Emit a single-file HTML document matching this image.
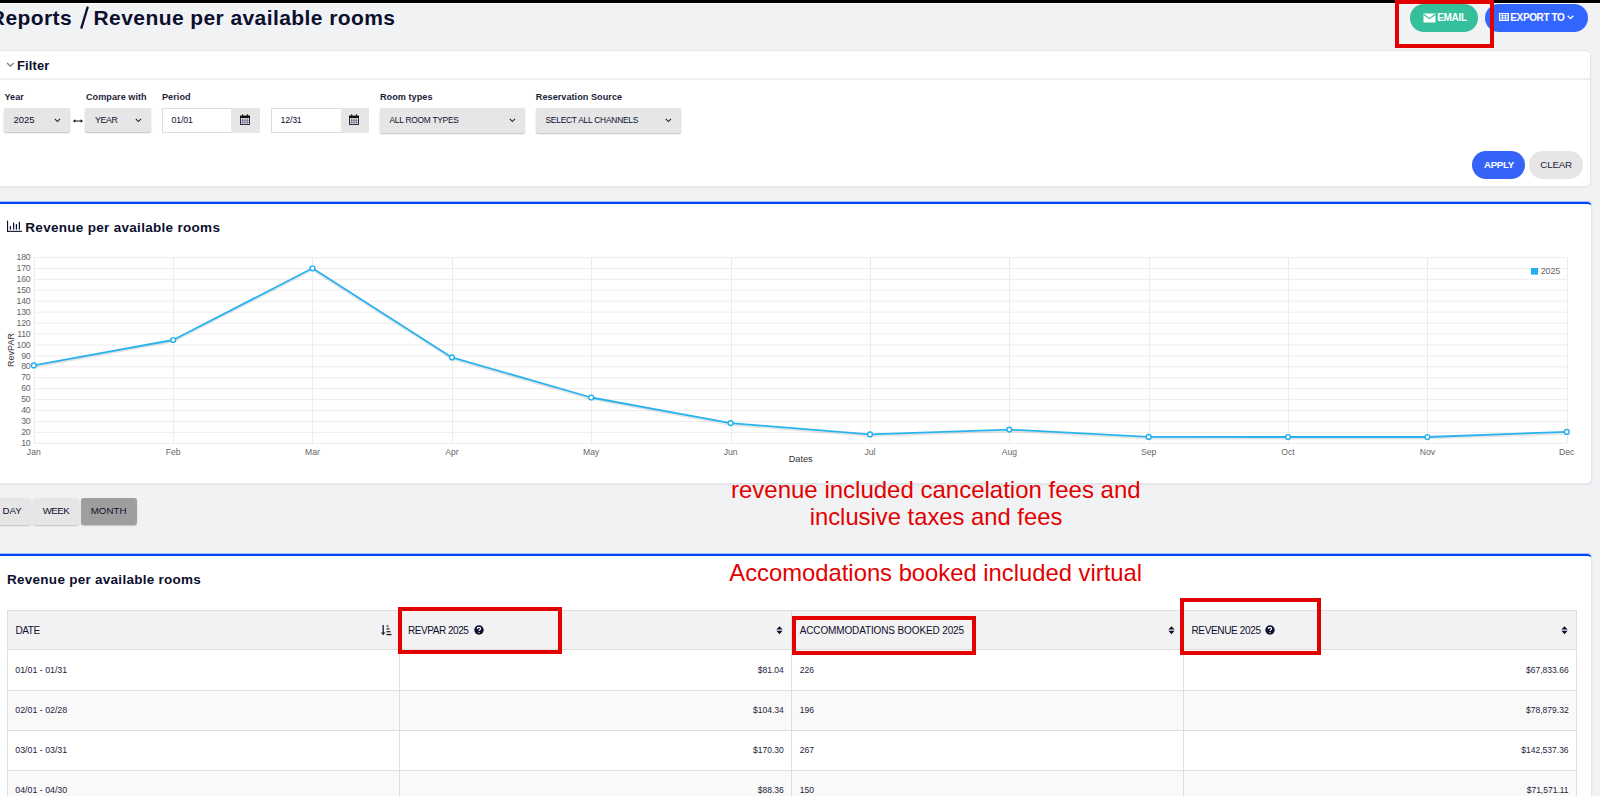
<!DOCTYPE html>
<html><head><meta charset="utf-8">
<style>
*{box-sizing:border-box;margin:0;padding:0}
html,body{width:1600px;height:796px;overflow:hidden;background:#f1f2f4;font-family:"Liberation Sans",sans-serif;color:#1b1d3a}
.a{position:absolute;white-space:nowrap;line-height:1}
.redbox{position:absolute;border:4px solid #e30000}
svg{position:absolute;overflow:visible}
</style></head>
<body>
<div style="position:absolute;left:0px;top:0px;width:1600px;height:3px;background:#000"></div>
<div style="position:absolute;left:0px;top:3px;width:1600px;height:1px;background:#fff"></div>
<div class="a" id="t-reports" style="top:7.32px;font-size:21px;color:#0c0f2e;font-weight:700;letter-spacing:0.4px;left:-10.2px;">Reports</div>
<svg style="left:79px;top:5px" width="11" height="25" viewBox="0 0 11 25"><path d="M2.2 23.6 L8.8 1.6" stroke="#0c0f2e" stroke-width="2.3"/></svg>
<div class="a" id="t-rev" style="top:7.32px;font-size:21px;color:#0c0f2e;font-weight:700;letter-spacing:0.42px;left:93.5px;">Revenue per available rooms</div>
<div style="position:absolute;left:1410px;top:4px;width:68px;height:28px;background:#36bf9d;border-radius:14px"></div>
<svg style="left:1423px;top:13px" width="13" height="10" viewBox="0 0 13 10"><rect x="0.5" y="0.5" width="12" height="9" fill="#fff"/><path d="M0.5 1.2 L6.5 5.6 L12.5 1.2" stroke="#36bf9d" stroke-width="1.1" fill="none"/></svg>
<div class="a" style="top:12.73px;font-size:10px;color:#fff;font-weight:700;letter-spacing:-0.35px;left:1437.3px;">EMAIL</div>
<div style="position:absolute;left:1485px;top:4px;width:103px;height:28px;background:#3366ff;border-radius:14px"></div>
<svg style="left:1498.7px;top:12.7px" width="10" height="8" viewBox="0 0 10 8"><rect x="0" y="0" width="10" height="8" fill="#fff"/><rect x="1.0" y="1.0" width="2" height="1.3" fill="#3366ff"/><rect x="1.0" y="3.2" width="2" height="1.3" fill="#3366ff"/><rect x="1.0" y="5.4" width="2" height="1.3" fill="#3366ff"/><rect x="3.9" y="1.0" width="2" height="1.3" fill="#3366ff"/><rect x="3.9" y="3.2" width="2" height="1.3" fill="#3366ff"/><rect x="3.9" y="5.4" width="2" height="1.3" fill="#3366ff"/><rect x="6.8" y="1.0" width="2" height="1.3" fill="#3366ff"/><rect x="6.8" y="3.2" width="2" height="1.3" fill="#3366ff"/><rect x="6.8" y="5.4" width="2" height="1.3" fill="#3366ff"/></svg>
<div class="a" style="top:12.73px;font-size:10px;color:#fff;font-weight:700;letter-spacing:-0.38px;left:1510.3px;">EXPORT TO</div>
<svg style="left:1567px;top:15px" width="7" height="5" viewBox="0 0 7 5"><path d="M0.7 0.8 L3.5 3.6 L6.3 0.8" stroke="#fff" stroke-width="1.3" fill="none"/></svg>
<div style="position:absolute;left:1395px;top:0px;width:99px;height:48px;border:4px solid #e30000"></div>
<div style="position:absolute;left:-10px;top:50px;width:1601px;height:137px;background:#fff;border:1px solid #e4e5e8;border-radius:5px;box-shadow:0 1px 2px rgba(0,0,0,.045)"></div>
<div style="position:absolute;left:-10px;top:78px;width:1600px;height:2px;background:#eeeff1"></div>
<svg style="left:6px;top:62px" width="9" height="6" viewBox="0 0 9 6"><path d="M1.1 1 L4.4 4.3 L7.7 1" stroke="#80808c" stroke-width="1.25" fill="none"/></svg>
<div class="a" style="top:58.60px;font-size:13px;color:#0c0f2e;font-weight:700;letter-spacing:0.1px;left:17px;">Filter</div>
<div class="a" style="top:92.60px;font-size:9.1px;color:#1b1d3a;font-weight:700;letter-spacing:0.05px;left:4.5px;">Year</div>
<div class="a" style="top:92.60px;font-size:9.1px;color:#1b1d3a;font-weight:700;letter-spacing:0.05px;left:86px;">Compare with</div>
<div class="a" style="top:92.60px;font-size:9.1px;color:#1b1d3a;font-weight:700;letter-spacing:0.05px;left:162px;">Period</div>
<div class="a" style="top:92.60px;font-size:9.1px;color:#1b1d3a;font-weight:700;letter-spacing:0.05px;left:380px;">Room types</div>
<div class="a" style="top:92.60px;font-size:9.1px;color:#1b1d3a;font-weight:700;letter-spacing:0.05px;left:535.8px;">Reservation Source</div>
<div style="position:absolute;left:4px;top:108px;width:66px;height:24px;background:#e6e6e6;border-radius:2px;box-shadow:0 1px 1.5px rgba(0,0,0,.25)"></div>
<div class="a" style="top:115.16px;font-size:9.5px;color:#0c0f2e;left:13.5px;">2025</div>
<svg style="left:53.5px;top:117.6px" width="7" height="5" viewBox="0 0 7 5"><path d="M0.8 0.9 L3.4 3.5 L6 0.9" stroke="#1b1d3a" stroke-width="1.05" fill="none"/></svg>
<svg style="left:73px;top:117.6px" width="10" height="6" viewBox="0 0 10 6"><path d="M1.5 3 H8.5" stroke="#111" stroke-width="1"/><path d="M0 3 L2.3 1.2 V4.8 Z M10 3 L7.7 1.2 V4.8 Z" fill="#111"/></svg>
<div style="position:absolute;left:85px;top:108px;width:66px;height:24px;background:#e6e6e6;border-radius:2px;box-shadow:0 1px 1.5px rgba(0,0,0,.25)"></div>
<div class="a" style="top:115.75px;font-size:8.8px;color:#0c0f2e;letter-spacing:-0.35px;left:95px;">YEAR</div>
<svg style="left:134.5px;top:117.6px" width="7" height="5" viewBox="0 0 7 5"><path d="M0.8 0.9 L3.4 3.5 L6 0.9" stroke="#1b1d3a" stroke-width="1.05" fill="none"/></svg>
<div style="position:absolute;left:162px;top:108px;width:98px;height:24.5px;background:#fff;border:1px solid #dcdcdc"></div>
<div style="position:absolute;left:231px;top:108px;width:29px;height:24.5px;background:#e6e6e6"></div>
<div class="a" style="top:115.75px;font-size:8.8px;color:#0c0f2e;letter-spacing:-0.2px;left:171.6px;">01/01</div>
<svg style="left:240.1px;top:114px" width="10" height="11" viewBox="0 0 10 11"><rect x="0.5" y="2.5" width="9" height="8" fill="#f4f4f8" stroke="#2a2a40" stroke-width="1"/><rect x="0" y="1.6" width="10" height="2.4" fill="#111"/><path d="M2.75 4V10.5 M5 4V10.5 M7.25 4V10.5 M0.5 6.2H9.5 M0.5 8.3H9.5" stroke="#555a70" stroke-width="0.7"/><rect x="1.8" y="0.3" width="1.5" height="2.4" rx="0.6" fill="#222"/><rect x="6.7" y="0.3" width="1.5" height="2.4" rx="0.6" fill="#222"/></svg>
<div style="position:absolute;left:271px;top:108px;width:97.5px;height:24.5px;background:#fff;border:1px solid #dcdcdc"></div>
<div style="position:absolute;left:340.5px;top:108px;width:28.0px;height:24.5px;background:#e6e6e6"></div>
<div class="a" style="top:115.75px;font-size:8.8px;color:#0c0f2e;letter-spacing:-0.2px;left:280.5px;">12/31</div>
<svg style="left:349.1px;top:114px" width="10" height="11" viewBox="0 0 10 11"><rect x="0.5" y="2.5" width="9" height="8" fill="#f4f4f8" stroke="#2a2a40" stroke-width="1"/><rect x="0" y="1.6" width="10" height="2.4" fill="#111"/><path d="M2.75 4V10.5 M5 4V10.5 M7.25 4V10.5 M0.5 6.2H9.5 M0.5 8.3H9.5" stroke="#555a70" stroke-width="0.7"/><rect x="1.8" y="0.3" width="1.5" height="2.4" rx="0.6" fill="#222"/><rect x="6.7" y="0.3" width="1.5" height="2.4" rx="0.6" fill="#222"/></svg>
<div style="position:absolute;left:379.5px;top:108px;width:145.5px;height:25px;background:#e6e6e6;border-radius:2px;box-shadow:0 1px 1.5px rgba(0,0,0,.25)"></div>
<div class="a" style="top:116.19px;font-size:8.4px;color:#0c0f2e;letter-spacing:-0.25px;left:389.5px;">ALL ROOM TYPES</div>
<svg style="left:509px;top:117.5px" width="7" height="5" viewBox="0 0 7 5"><path d="M0.8 0.9 L3.4 3.5 L6 0.9" stroke="#1b1d3a" stroke-width="1.05" fill="none"/></svg>
<div style="position:absolute;left:535.5px;top:108px;width:145.5px;height:25px;background:#e6e6e6;border-radius:2px;box-shadow:0 1px 1.5px rgba(0,0,0,.25)"></div>
<div class="a" style="top:116.19px;font-size:8.4px;color:#0c0f2e;letter-spacing:-0.22px;left:545.5px;">SELECT ALL CHANNELS</div>
<svg style="left:665px;top:117.5px" width="7" height="5" viewBox="0 0 7 5"><path d="M0.8 0.9 L3.4 3.5 L6 0.9" stroke="#1b1d3a" stroke-width="1.05" fill="none"/></svg>
<div style="position:absolute;left:1472px;top:151px;width:53px;height:27.5px;background:#3563f8;border-radius:14px"></div>
<div class="a" style="top:160.09px;font-size:9.7px;color:#fff;font-weight:700;letter-spacing:-0.3px;left:1484px;">APPLY</div>
<div style="position:absolute;left:1528.5px;top:151px;width:54.5px;height:27.5px;background:#e6e6e6;border-radius:14px"></div>
<div class="a" style="top:160.09px;font-size:9.7px;color:#1b1d3a;letter-spacing:-0.15px;left:1540.3px;">CLEAR</div>
<div style="position:absolute;left:-10px;top:201px;width:1602px;height:283px;background:rgba(0,68,255,.28);border-radius:5px;box-shadow:0 1px 3px rgba(0,0,0,.06)"></div>
<div style="position:absolute;left:-10px;top:202px;width:1602px;height:282px;background:#fff;border:1px solid #e4e5e8;border-top:2px solid #0044ff;border-radius:5px"></div>
<svg style="left:6px;top:220px" width="17" height="13" viewBox="0 0 17 13"><rect x="1" y="0.6" width="1.1" height="11.3" fill="#0c0f2e"/><rect x="1" y="10.8" width="15" height="1.1" fill="#0c0f2e"/><rect x="3.8" y="6" width="1.2" height="3.6" fill="#0c0f2e"/><rect x="7" y="2.6" width="1.2" height="7" fill="#0c0f2e"/><rect x="9.8" y="4.1" width="1.2" height="5.5" fill="#0c0f2e"/><rect x="12.8" y="1.8" width="1.2" height="7.8" fill="#0c0f2e"/></svg>
<div class="a" style="top:220.57px;font-size:13.5px;color:#0c0f2e;font-weight:700;letter-spacing:0.3px;left:25.3px;">Revenue per available rooms</div>
<svg style="left:0;top:0" width="1600" height="796"><line x1="33.8" y1="257.50" x2="1566.76" y2="257.50" stroke="#ededed" stroke-width="1"/><line x1="33.8" y1="268.43" x2="1566.76" y2="268.43" stroke="#ededed" stroke-width="1"/><line x1="33.8" y1="279.36" x2="1566.76" y2="279.36" stroke="#ededed" stroke-width="1"/><line x1="33.8" y1="290.29" x2="1566.76" y2="290.29" stroke="#ededed" stroke-width="1"/><line x1="33.8" y1="301.22" x2="1566.76" y2="301.22" stroke="#ededed" stroke-width="1"/><line x1="33.8" y1="312.15" x2="1566.76" y2="312.15" stroke="#ededed" stroke-width="1"/><line x1="33.8" y1="323.08" x2="1566.76" y2="323.08" stroke="#ededed" stroke-width="1"/><line x1="33.8" y1="334.01" x2="1566.76" y2="334.01" stroke="#ededed" stroke-width="1"/><line x1="33.8" y1="344.94" x2="1566.76" y2="344.94" stroke="#ededed" stroke-width="1"/><line x1="33.8" y1="355.87" x2="1566.76" y2="355.87" stroke="#ededed" stroke-width="1"/><line x1="33.8" y1="366.80" x2="1566.76" y2="366.80" stroke="#ededed" stroke-width="1"/><line x1="33.8" y1="377.73" x2="1566.76" y2="377.73" stroke="#ededed" stroke-width="1"/><line x1="33.8" y1="388.66" x2="1566.76" y2="388.66" stroke="#ededed" stroke-width="1"/><line x1="33.8" y1="399.59" x2="1566.76" y2="399.59" stroke="#ededed" stroke-width="1"/><line x1="33.8" y1="410.52" x2="1566.76" y2="410.52" stroke="#ededed" stroke-width="1"/><line x1="33.8" y1="421.45" x2="1566.76" y2="421.45" stroke="#ededed" stroke-width="1"/><line x1="33.8" y1="432.38" x2="1566.76" y2="432.38" stroke="#ededed" stroke-width="1"/><line x1="33.8" y1="443.31" x2="1566.76" y2="443.31" stroke="#ededed" stroke-width="1"/><line x1="34.5" y1="257.5" x2="34.5" y2="443.31" stroke="#ececec" stroke-width="1"/><line x1="173.5" y1="257.5" x2="173.5" y2="443.31" stroke="#ececec" stroke-width="1"/><line x1="312.5" y1="257.5" x2="312.5" y2="443.31" stroke="#ececec" stroke-width="1"/><line x1="452.5" y1="257.5" x2="452.5" y2="443.31" stroke="#ececec" stroke-width="1"/><line x1="591.5" y1="257.5" x2="591.5" y2="443.31" stroke="#ececec" stroke-width="1"/><line x1="731.5" y1="257.5" x2="731.5" y2="443.31" stroke="#ececec" stroke-width="1"/><line x1="870.5" y1="257.5" x2="870.5" y2="443.31" stroke="#ececec" stroke-width="1"/><line x1="1009.5" y1="257.5" x2="1009.5" y2="443.31" stroke="#ececec" stroke-width="1"/><line x1="1149.5" y1="257.5" x2="1149.5" y2="443.31" stroke="#ececec" stroke-width="1"/><line x1="1288.5" y1="257.5" x2="1288.5" y2="443.31" stroke="#ececec" stroke-width="1"/><line x1="1427.5" y1="257.5" x2="1427.5" y2="443.31" stroke="#ececec" stroke-width="1"/><line x1="1567.5" y1="257.5" x2="1567.5" y2="443.31" stroke="#ececec" stroke-width="1"/><polyline points="33.8,365.4 173.2,340.0 312.5,268.3 451.9,357.4 591.2,397.5 730.6,423.1 870.0,434.4 1009.3,429.6 1148.7,436.9 1288.0,437.0 1427.4,437.0 1566.8,431.9" transform="translate(0,1.6)" fill="none" stroke="rgba(0,0,0,0.10)" stroke-width="2" stroke-linejoin="round"/><polyline points="33.8,365.4 173.2,340.0 312.5,268.3 451.9,357.4 591.2,397.5 730.6,423.1 870.0,434.4 1009.3,429.6 1148.7,436.9 1288.0,437.0 1427.4,437.0 1566.8,431.9" fill="none" stroke="#2ab2ee" stroke-width="1.8" stroke-linejoin="round"/><circle cx="33.8" cy="365.4" r="2.4" fill="#fff" stroke="#24b0ee" stroke-width="1.4"/><circle cx="173.2" cy="340.0" r="2.4" fill="#fff" stroke="#24b0ee" stroke-width="1.4"/><circle cx="312.5" cy="268.3" r="2.4" fill="#fff" stroke="#24b0ee" stroke-width="1.4"/><circle cx="451.9" cy="357.4" r="2.4" fill="#fff" stroke="#24b0ee" stroke-width="1.4"/><circle cx="591.2" cy="397.5" r="2.4" fill="#fff" stroke="#24b0ee" stroke-width="1.4"/><circle cx="730.6" cy="423.1" r="2.4" fill="#fff" stroke="#24b0ee" stroke-width="1.4"/><circle cx="870.0" cy="434.4" r="2.4" fill="#fff" stroke="#24b0ee" stroke-width="1.4"/><circle cx="1009.3" cy="429.6" r="2.4" fill="#fff" stroke="#24b0ee" stroke-width="1.4"/><circle cx="1148.7" cy="436.9" r="2.4" fill="#fff" stroke="#24b0ee" stroke-width="1.4"/><circle cx="1288.0" cy="437.0" r="2.4" fill="#fff" stroke="#24b0ee" stroke-width="1.4"/><circle cx="1427.4" cy="437.0" r="2.4" fill="#fff" stroke="#24b0ee" stroke-width="1.4"/><circle cx="1566.8" cy="431.9" r="2.4" fill="#fff" stroke="#24b0ee" stroke-width="1.4"/><rect x="1531" y="268" width="7" height="6.6" fill="#24b0ee"/></svg>
<div class="a" style="top:253.15px;font-size:8.8px;color:#666;letter-spacing:-0.25px;right:1569.5px;">180</div>
<div class="a" style="top:264.08px;font-size:8.8px;color:#666;letter-spacing:-0.25px;right:1569.5px;">170</div>
<div class="a" style="top:275.01px;font-size:8.8px;color:#666;letter-spacing:-0.25px;right:1569.5px;">160</div>
<div class="a" style="top:285.94px;font-size:8.8px;color:#666;letter-spacing:-0.25px;right:1569.5px;">150</div>
<div class="a" style="top:296.87px;font-size:8.8px;color:#666;letter-spacing:-0.25px;right:1569.5px;">140</div>
<div class="a" style="top:307.80px;font-size:8.8px;color:#666;letter-spacing:-0.25px;right:1569.5px;">130</div>
<div class="a" style="top:318.73px;font-size:8.8px;color:#666;letter-spacing:-0.25px;right:1569.5px;">120</div>
<div class="a" style="top:329.66px;font-size:8.8px;color:#666;letter-spacing:-0.25px;right:1569.5px;">110</div>
<div class="a" style="top:340.59px;font-size:8.8px;color:#666;letter-spacing:-0.25px;right:1569.5px;">100</div>
<div class="a" style="top:351.52px;font-size:8.8px;color:#666;letter-spacing:-0.25px;right:1569.5px;">90</div>
<div class="a" style="top:362.45px;font-size:8.8px;color:#666;letter-spacing:-0.25px;right:1569.5px;">80</div>
<div class="a" style="top:373.38px;font-size:8.8px;color:#666;letter-spacing:-0.25px;right:1569.5px;">70</div>
<div class="a" style="top:384.31px;font-size:8.8px;color:#666;letter-spacing:-0.25px;right:1569.5px;">60</div>
<div class="a" style="top:395.24px;font-size:8.8px;color:#666;letter-spacing:-0.25px;right:1569.5px;">50</div>
<div class="a" style="top:406.17px;font-size:8.8px;color:#666;letter-spacing:-0.25px;right:1569.5px;">40</div>
<div class="a" style="top:417.10px;font-size:8.8px;color:#666;letter-spacing:-0.25px;right:1569.5px;">30</div>
<div class="a" style="top:428.03px;font-size:8.8px;color:#666;letter-spacing:-0.25px;right:1569.5px;">20</div>
<div class="a" style="top:438.96px;font-size:8.8px;color:#666;letter-spacing:-0.25px;right:1569.5px;">10</div>
<div class="a" style="top:447.52px;font-size:8.6px;color:#666;left:33.8px;transform:translateX(-50%);">Jan</div>
<div class="a" style="top:447.52px;font-size:8.6px;color:#666;left:173.16000000000003px;transform:translateX(-50%);">Feb</div>
<div class="a" style="top:447.52px;font-size:8.6px;color:#666;left:312.52000000000004px;transform:translateX(-50%);">Mar</div>
<div class="a" style="top:447.52px;font-size:8.6px;color:#666;left:451.88000000000005px;transform:translateX(-50%);">Apr</div>
<div class="a" style="top:447.52px;font-size:8.6px;color:#666;left:591.24px;transform:translateX(-50%);">May</div>
<div class="a" style="top:447.52px;font-size:8.6px;color:#666;left:730.6px;transform:translateX(-50%);">Jun</div>
<div class="a" style="top:447.52px;font-size:8.6px;color:#666;left:869.96px;transform:translateX(-50%);">Jul</div>
<div class="a" style="top:447.52px;font-size:8.6px;color:#666;left:1009.32px;transform:translateX(-50%);">Aug</div>
<div class="a" style="top:447.52px;font-size:8.6px;color:#666;left:1148.68px;transform:translateX(-50%);">Sep</div>
<div class="a" style="top:447.52px;font-size:8.6px;color:#666;left:1288.0400000000002px;transform:translateX(-50%);">Oct</div>
<div class="a" style="top:447.52px;font-size:8.6px;color:#666;left:1427.4px;transform:translateX(-50%);">Nov</div>
<div class="a" style="top:447.52px;font-size:8.6px;color:#666;left:1566.76px;transform:translateX(-50%);">Dec</div>
<div class="a" style="top:267.18px;font-size:9px;color:#666;letter-spacing:-0.2px;left:1540.8px;">2025</div>
<div class="a" style="top:454.81px;font-size:9.2px;color:#333;left:800.7px;transform:translateX(-50%);">Dates</div>
<div class="a" style="left:10.5px;top:350.3px;font-size:9px;color:#333;transform:translate(-50%,-50%) rotate(-90deg)">RevPAR</div>
<div style="position:absolute;left:-10px;top:498px;width:41px;height:27px;background:#e6e6e6;border-radius:3px;box-shadow:0 1px 1.5px rgba(0,0,0,.2)"></div>
<div style="position:absolute;left:33px;top:498px;width:46px;height:27px;background:#e6e6e6;border-radius:3px;box-shadow:0 1px 1.5px rgba(0,0,0,.2)"></div>
<div style="position:absolute;left:81px;top:498px;width:56px;height:27px;background:#9e9e9e;border-radius:3px;box-shadow:0 1px 1.5px rgba(0,0,0,.2)"></div>
<div class="a" style="top:505.79px;font-size:9.7px;color:#0c0f2e;left:2.5px;">DAY</div>
<div class="a" style="top:505.79px;font-size:9.7px;color:#0c0f2e;letter-spacing:-0.5px;left:42.7px;">WEEK</div>
<div class="a" style="top:505.79px;font-size:9.7px;color:#0c0f2e;letter-spacing:0.1px;left:90.7px;">MONTH</div>
<div style="position:absolute;left:-10px;top:553px;width:1602px;height:277px;background:rgba(0,68,255,.28);border-radius:5px;box-shadow:0 1px 3px rgba(0,0,0,.06)"></div>
<div style="position:absolute;left:-10px;top:554px;width:1602px;height:276px;background:#fff;border:1px solid #e4e5e8;border-top:2px solid #0044ff;border-radius:5px"></div>
<div class="a" style="top:572.57px;font-size:13.5px;color:#0c0f2e;font-weight:700;letter-spacing:0.27px;left:7px;">Revenue per available rooms</div>
<div style="position:absolute;left:7px;top:610px;width:1570px;height:40px;background:#f2f2f2;border:1px solid #dedede"></div>
<div style="position:absolute;left:7px;top:651px;width:1570px;height:40px;background:#fff;border-left:1px solid #dedede;border-right:1px solid #dedede;border-bottom:1px solid #dedede"></div>
<div style="position:absolute;left:7px;top:691px;width:1570px;height:40px;background:#f9f9f9;border-left:1px solid #dedede;border-right:1px solid #dedede;border-bottom:1px solid #dedede"></div>
<div style="position:absolute;left:7px;top:731px;width:1570px;height:40px;background:#fff;border-left:1px solid #dedede;border-right:1px solid #dedede;border-bottom:1px solid #dedede"></div>
<div style="position:absolute;left:7px;top:771px;width:1570px;height:40px;background:#f9f9f9;border-left:1px solid #dedede;border-right:1px solid #dedede;border-bottom:1px solid #dedede"></div>
<div style="position:absolute;left:399px;top:610px;width:1px;height:190px;background:#dedede"></div>
<div style="position:absolute;left:791px;top:610px;width:1px;height:190px;background:#dedede"></div>
<div style="position:absolute;left:1183px;top:610px;width:1px;height:190px;background:#dedede"></div>
<div class="a" style="top:625.53px;font-size:10px;color:#0c0f2e;letter-spacing:-0.4px;left:15.5px;">DATE</div>
<div class="a" style="top:625.53px;font-size:10px;color:#0c0f2e;letter-spacing:-0.45px;left:408px;">REVPAR 2025</div>
<div class="a" style="top:625.53px;font-size:10px;color:#0c0f2e;letter-spacing:-0.13px;left:799.7px;">ACCOMMODATIONS BOOKED 2025</div>
<div class="a" style="top:625.53px;font-size:10px;color:#0c0f2e;letter-spacing:-0.35px;left:1191.5px;">REVENUE 2025</div>
<svg style="left:473.8px;top:625.3px" width="10" height="10" viewBox="0 0 10 10"><circle cx="5" cy="5" r="4.7" fill="#0c0f2e"/><path d="M3.4 3.9 Q3.4 2.3 5 2.3 Q6.6 2.3 6.6 3.7 Q6.6 4.6 5.6 5 Q5 5.3 5 6" stroke="#fff" stroke-width="1.2" fill="none"/><circle cx="5" cy="7.6" r="0.7" fill="#fff"/></svg>
<svg style="left:1265.4px;top:625.3px" width="10" height="10" viewBox="0 0 10 10"><circle cx="5" cy="5" r="4.7" fill="#0c0f2e"/><path d="M3.4 3.9 Q3.4 2.3 5 2.3 Q6.6 2.3 6.6 3.7 Q6.6 4.6 5.6 5 Q5 5.3 5 6" stroke="#fff" stroke-width="1.2" fill="none"/><circle cx="5" cy="7.6" r="0.7" fill="#fff"/></svg>
<svg style="left:776.3px;top:625.8px" width="7" height="9" viewBox="0 0 7 9"><path d="M0.4 3.6 L3.5 0.2 L6.6 3.6 Z M0.4 4.8 L3.5 8.2 L6.6 4.8 Z" fill="#0c0f2e"/></svg>
<svg style="left:1168.3px;top:625.8px" width="7" height="9" viewBox="0 0 7 9"><path d="M0.4 3.6 L3.5 0.2 L6.6 3.6 Z M0.4 4.8 L3.5 8.2 L6.6 4.8 Z" fill="#0c0f2e"/></svg>
<svg style="left:1561px;top:625.8px" width="7" height="9" viewBox="0 0 7 9"><path d="M0.4 3.6 L3.5 0.2 L6.6 3.6 Z M0.4 4.8 L3.5 8.2 L6.6 4.8 Z" fill="#0c0f2e"/></svg>
<svg style="left:380.5px;top:625px" width="11" height="11" viewBox="0 0 11 11"><path d="M2.2 0 V8.5" stroke="#1b1d3a" stroke-width="1.3"/><path d="M0 7.5 L2.2 10.3 L4.4 7.5 Z" fill="#1b1d3a"/><rect x="5.5" y="0.5" width="2" height="1.2" fill="#1b1d3a"/><rect x="5.5" y="3.3" width="3" height="1.2" fill="#1b1d3a"/><rect x="5.5" y="6.1" width="4" height="1.2" fill="#1b1d3a"/><rect x="5.5" y="8.9" width="5" height="1.3" fill="#1b1d3a"/></svg>
<div class="a" style="top:665.95px;font-size:8.8px;color:#22223a;left:15.3px;">01/01 - 01/31</div>
<div class="a" style="top:666.20px;font-size:8.5px;color:#22223a;right:816.2px;">$81.04</div>
<div class="a" style="top:666.20px;font-size:8.5px;color:#22223a;left:799.7px;">226</div>
<div class="a" style="top:666.20px;font-size:8.5px;color:#22223a;right:31.40000000000009px;">$67,833.66</div>
<div class="a" style="top:705.95px;font-size:8.8px;color:#22223a;left:15.3px;">02/01 - 02/28</div>
<div class="a" style="top:706.20px;font-size:8.5px;color:#22223a;right:816.2px;">$104.34</div>
<div class="a" style="top:706.20px;font-size:8.5px;color:#22223a;left:799.7px;">196</div>
<div class="a" style="top:706.20px;font-size:8.5px;color:#22223a;right:31.40000000000009px;">$78,879.32</div>
<div class="a" style="top:745.95px;font-size:8.8px;color:#22223a;left:15.3px;">03/01 - 03/31</div>
<div class="a" style="top:746.20px;font-size:8.5px;color:#22223a;right:816.2px;">$170.30</div>
<div class="a" style="top:746.20px;font-size:8.5px;color:#22223a;left:799.7px;">267</div>
<div class="a" style="top:746.20px;font-size:8.5px;color:#22223a;right:31.40000000000009px;">$142,537.36</div>
<div class="a" style="top:785.95px;font-size:8.8px;color:#22223a;left:15.3px;">04/01 - 04/30</div>
<div class="a" style="top:786.20px;font-size:8.5px;color:#22223a;right:816.2px;">$88.36</div>
<div class="a" style="top:786.20px;font-size:8.5px;color:#22223a;left:799.7px;">150</div>
<div class="a" style="top:786.20px;font-size:8.5px;color:#22223a;right:31.40000000000009px;">$71,571.11</div>
<div style="position:absolute;left:398px;top:607px;width:164px;height:47px;border:4px solid #e30000"></div>
<div style="position:absolute;left:792px;top:616px;width:184px;height:38.5px;border:4px solid #e30000"></div>
<div style="position:absolute;left:1180px;top:597.5px;width:140.5px;height:57.0px;border:4px solid #e30000"></div>
<div class="a" style="top:477.68px;font-size:24px;color:#e30000;left:935.8px;transform:translateX(-50%);">revenue included cancelation fees and</div>
<div class="a" style="top:505.25px;font-size:23.8px;color:#e30000;left:936px;transform:translateX(-50%);">inclusive taxes and fees</div>
<div class="a" style="top:560.85px;font-size:23.8px;color:#e30000;left:935.7px;transform:translateX(-50%);">Accomodations booked included virtual</div>
</body></html>
